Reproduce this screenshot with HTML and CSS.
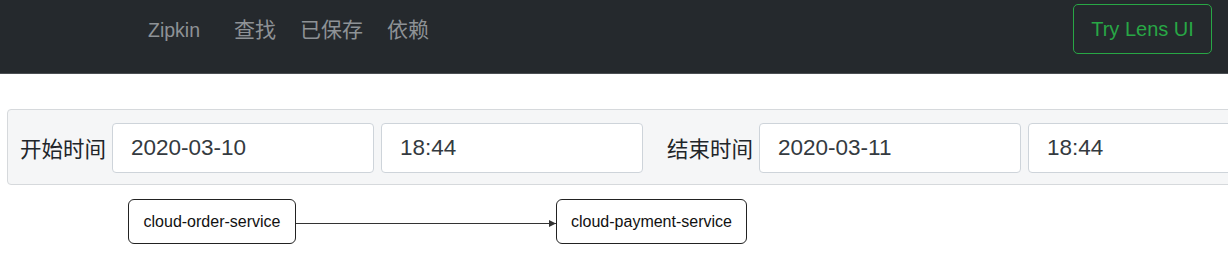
FILE: index.html
```html
<!DOCTYPE html>
<html lang="zh">
<head>
<meta charset="utf-8">
<title>Zipkin</title>
<link rel="stylesheet" href="styles.css">
</head>
<body>
<header class="navbar">
  <a class="brand">Zipkin</a>
  <nav class="links">
    <a class="link">查找</a>
    <a class="link">已保存</a>
    <a class="link">依赖</a>
  </nav>
  <button class="lens-btn">Try Lens UI</button>
</header>
<main class="content">
  <div class="filter-panel">
    <label class="label">开始时间</label>
    <input class="field" type="text" value="2020-03-10">
    <input class="field" type="text" value="18:44">
    <label class="label label-end">结束时间</label>
    <input class="field" type="text" value="2020-03-11">
    <input class="field" type="text" value="18:44">
  </div>
  <div class="graph">
    <svg class="edges" width="1228" height="60" viewBox="0 0 1228 60">
      <defs>
        <marker id="arrow" markerWidth="8" markerHeight="8" refX="7" refY="4" orient="auto" markerUnits="userSpaceOnUse">
          <path d="M0,0.5 L7,4 L0,7.5 Z" fill="#333"/>
        </marker>
      </defs>
      <line x1="296" y1="24.5" x2="556" y2="24.5" stroke="#333" stroke-width="1.2" marker-end="url(#arrow)"/>
    </svg>
    <div class="node node-order">cloud-order-service</div>
    <div class="node node-payment">cloud-payment-service</div>
  </div>
</main>
</body>
</html>
```
FILE: styles.css
```css
html, body {
  margin: 0;
  padding: 0;
  overflow: hidden;
  background: #fff;
  font-family: "Liberation Sans", "Noto Sans CJK SC", sans-serif;
}

.navbar {
  height: 73px;
  background: #25292d;
  border-bottom: 1px solid #4a4e52;
  display: flex;
  align-items: flex-start;
  padding-left: 148px;
  padding-right: 16px;
  box-sizing: content-box;
}

.brand {
  color: #8e9296;
  font-size: 19.5px;
  line-height: 24px;
  margin-top: 18px;
  margin-right: 22px;
}

.links {
  display: flex;
  margin-top: 17px;
}

.link {
  color: #8e9296;
  font-size: 21px;
  line-height: 26px;
  padding: 0 12px;
}

.lens-btn {
  margin-left: auto;
  margin-top: 4px;
  width: 139px;
  height: 50px;
  background: transparent;
  border: 1px solid #28a745;
  border-radius: 5px;
  color: #28a745;
  font-family: "Liberation Sans", sans-serif;
  font-size: 20px;
  padding: 0;
}

.content {
  padding: 35px 0 0 7px;
}

.filter-panel {
  width: 1300px;
  height: 76px;
  box-sizing: border-box;
  background: #f5f6f7;
  border: 1px solid #d6d9dc;
  border-radius: 4px;
  display: flex;
  align-items: center;
  padding: 1px 12px 0;
  gap: 7px;
}

.label {
  color: #212529;
  font-size: 21.5px;
  width: 85px;
  white-space: nowrap;
}

.label-end {
  margin-left: 17px;
}

.field {
  width: 262px;
  height: 50px;
  box-sizing: border-box;
  border: 1px solid #ced4da;
  border-radius: 4px;
  background: #fff;
  padding: 0 18px;
  font-family: "Liberation Sans", sans-serif;
  font-size: 22.5px;
  color: #343a40;
  flex: none;
}

.graph {
  position: relative;
  height: 70px;
  margin-left: -7px;
  margin-top: 13px;
}

.edges {
  position: absolute;
  left: 0;
  top: 1px;
}

.node {
  position: absolute;
  top: 1px;
  height: 45px;
  box-sizing: border-box;
  border: 1.3px solid #222;
  border-radius: 6px;
  background: #fff;
  display: flex;
  align-items: center;
  justify-content: center;
  font-size: 16px;
  color: #111;
}

.node-order {
  left: 128px;
  width: 168px;
}

.node-payment {
  left: 556px;
  width: 191px;
}
```
